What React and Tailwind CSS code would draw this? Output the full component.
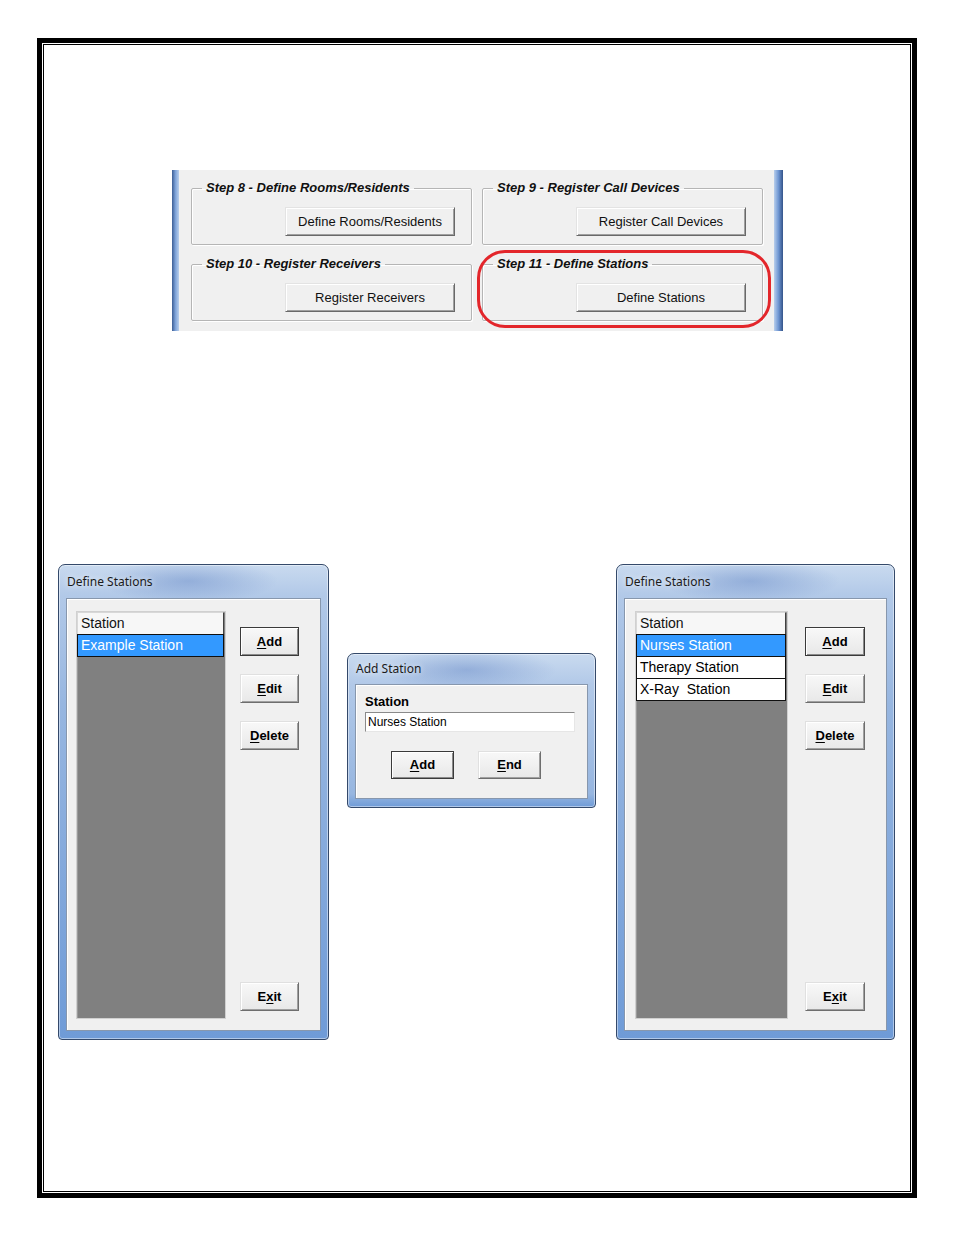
import React from 'react';

const FONT = { fontFamily: '"Liberation Sans", Arial, sans-serif' };

// classic win32 push button used in the setup panel
const PanelButton = ({ children }) => (
  <div className="flex items-center justify-center w-[170px] h-[29px] bg-[#f0f0f0] border border-t-[#e3e3e3] border-l-[#e3e3e3] border-r-[#696969] border-b-[#696969] shadow-[inset_1px_1px_0_#fff,inset_-1px_-1px_0_#a0a0a0] text-[13px] text-[#111]">
    {children}
  </div>
);

// dialog button, first one is the default (dark frame)
const Btn = ({ children, w = 'w-[59px]', h = 'h-[29px]', def }) => (
  <div
    className={`flex items-center justify-center ${w} ${h} bg-linear-to-b from-[#f8f8f8] to-[#e8e8e8] text-[13px] font-bold text-black ${
      def
        ? 'border border-[#3a3a3a] shadow-[inset_1px_1px_0_#fff,inset_-1px_-1px_0_#8a8a8a]'
        : 'border border-t-[#e0e0e0] border-l-[#e0e0e0] border-r-[#6e6e6e] border-b-[#6e6e6e] shadow-[inset_1px_1px_0_#fff,inset_-1px_-1px_0_#a0a0a0]'
    }`}
  >
    {children}
  </div>
);

const U = ({ children }) => <span className="underline underline-offset-2">{children}</span>;

const Group = ({ title, button }) => (
  <fieldset className="h-[65px] border border-[#b5b5b5] shadow-[1px_1px_0_#fff,inset_1px_1px_0_#fff] rounded-[2px] p-0 m-0">
    <legend className="ml-[10px] px-[4px] text-[13px] leading-[16px] font-bold italic text-[#111]">{title}</legend>
    <div className="flex justify-end pr-[16px] pt-[11px]">
      <PanelButton>{button}</PanelButton>
    </div>
  </fieldset>
);

const Frame = ({ title, titleH, className, children }) => (
  <div
    className={`flex flex-col rounded-t-[7px] rounded-b-[4px] border border-[#34496a] px-[7px] pb-[8px] bg-[radial-gradient(ellipse_90px_22px_at_48%_16px,rgba(70,110,185,0.35),transparent),linear-gradient(to_bottom,#c9daef_0px,#b2c9e8_30px,#97b6e0_140px,#6f9bd7_100%)] shadow-[inset_0_0_0_1px_rgba(255,255,255,0.45)] ${className}`}
  >
    <div
      className={`${titleH} flex items-center pl-[1px] text-[12px] text-[#1a1a1a] [text-shadow:0_0_6px_#fff]`}
      style={{ fontFamily: '"Noto Sans", "Liberation Sans", sans-serif' }}
    >
      {title}
    </div>
    <div className="flex-1 border border-[#8797ad] bg-[#f0f0f0] shadow-[inset_1px_1px_0_#fff]">{children}</div>
  </div>
);

const Row = ({ children, sel, header }) => (
  <div
    className={`h-[23px] -mt-px first:mt-0 flex items-center px-[3px] text-[14px] whitespace-pre border ${
      header
        ? 'h-[22px] bg-[#f7f7f7] border-t-[#d8d8d8] border-l-[#d8d8d8] border-r-[#404040] border-b-[#202020] text-[#111]'
        : sel
        ? 'bg-[#3399ff] text-white border-[#101010]'
        : 'bg-white text-black border-[#101010]'
    }`}
  >
    {children}
  </div>
);

const StationList = ({ w, rows }) => (
  <div className={`${w} h-[408px] bg-[#808080] border border-[#d0d0d0] shadow-[inset_1px_1px_0_#9a9a9a] pr-[1px]`}>
    <Row header>Station</Row>
    {rows.map((r, i) => (
      <Row key={r} sel={i === 0}>
        {r}
      </Row>
    ))}
  </div>
);

const ButtonColumn = ({ ml, w }) => (
  <div className={`${ml} h-[408px] flex flex-col gap-[18px] pt-[16px] pb-[8px]`}>
    <Btn w={w} def>
      <U>A</U>dd
    </Btn>
    <Btn w={w}>
      <U>E</U>dit
    </Btn>
    <Btn w={w}>
      <U>D</U>elete
    </Btn>
    <div className="mt-auto">
      <Btn w={w}>
        E<U>x</U>it
      </Btn>
    </div>
  </div>
);

export default function App() {
  return (
    <div className="w-[954px] min-h-[1235px] bg-white pt-[38px] pl-[37px]" style={FONT}>
      <div className="w-[880px] h-[1160px] border-[5px] border-black p-[1px]">
        <div className="h-full border border-black">
          {/* Setup wizard panel */}
          <div className="relative ml-[128px] mt-[125px] w-[611px] h-[161px] flex">
            <div className="w-[7px] bg-linear-to-r from-[#3d5f96] via-[#7fa3d8] to-[#b9cfec]" />
            <div className="flex-1 bg-[#f0f0f0] grid grid-cols-2 content-start gap-x-[10px] gap-y-[11px] pl-[12px] pr-[11px] pt-[10px]">
              <Group title="Step 8 - Define Rooms/Residents" button="Define Rooms/Residents" />
              <Group title="Step 9 - Register Call Devices" button="Register Call Devices" />
              <Group title="Step 10 - Register Receivers" button="Register Receivers" />
              <Group title="Step 11 - Define Stations" button="Define Stations" />
            </div>
            <div className="w-[9px] bg-linear-to-r from-[#b9cfec] via-[#6f96d2] to-[#34548a]" />
            <div className="absolute left-[305px] top-[80px] w-[294px] h-[78px] rounded-[28px] border-[3px] border-[#e3262b]" />
          </div>

          {/* Dialog screenshots */}
          <div className="flex items-start mt-[233px] ml-[14px]">
            <Frame title="Define Stations" titleH="h-[33px]" className="w-[271px] h-[476px]">
              <div className="flex pl-[9px] pt-[12px]">
                <StationList w="w-[150px]" rows={['Example Station']} />
                <ButtonColumn ml="ml-[14px]" w="w-[59px]" />
              </div>
            </Frame>

            <Frame title="Add Station" titleH="h-[30px]" className="ml-[18px] mt-[89px] w-[249px] h-[155px] pb-[6px]">
              <div className="pl-[9px] pt-[9px]">
                <div className="text-[13px] leading-[16px] font-bold text-black">Station</div>
                <div className="mt-[2px] w-[210px] h-[20px] bg-white border border-t-[#8a8a8a] border-l-[#8a8a8a] border-r-[#e6e6e6] border-b-[#e6e6e6] flex items-center pl-[2px] text-[12px] text-black">
                  Nurses Station
                </div>
                <div className="flex gap-[24px] pl-[26px] mt-[19px]">
                  <Btn w="w-[63px]" h="h-[28px]" def>
                    <U>A</U>dd
                  </Btn>
                  <Btn w="w-[63px]" h="h-[28px]">
                    <U>E</U>nd
                  </Btn>
                </div>
              </div>
            </Frame>

            <Frame title="Define Stations" titleH="h-[33px]" className="ml-[20px] w-[279px] h-[476px]">
              <div className="flex pl-[10px] pt-[12px]">
                <StationList w="w-[153px]" rows={['Nurses Station', 'Therapy Station', 'X-Ray  Station']} />
                <ButtonColumn ml="ml-[17px]" w="w-[60px]" />
              </div>
            </Frame>
          </div>
        </div>
      </div>
    </div>
  );
}
